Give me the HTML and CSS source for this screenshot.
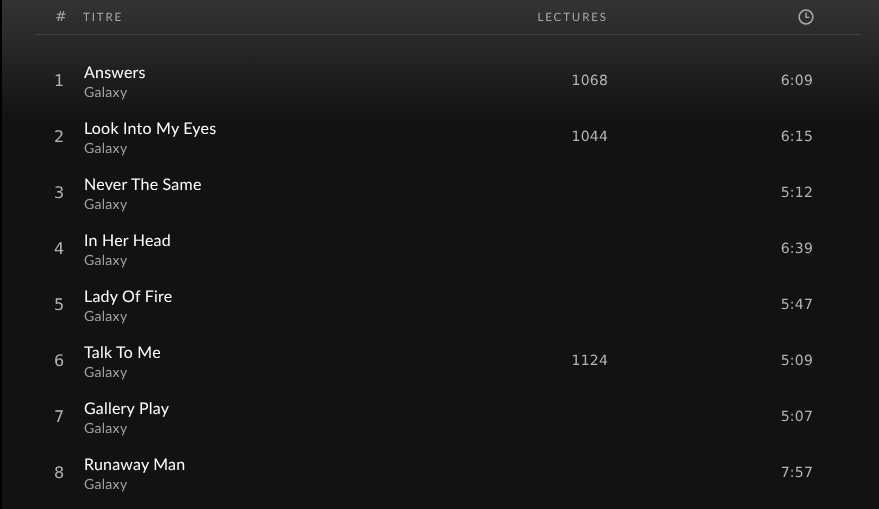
FILE: index.html
```html
<!DOCTYPE html>
<html lang="fr">
<head>
<meta charset="utf-8">
<title>Galaxy</title>
<link rel="stylesheet" href="styles.css">
</head>
<body>
<main class="panel">
  <div class="head">
    <span class="h-num">#</span>
    <span class="h-title">TITRE</span>
    <span class="h-plays">LECTURES</span>
    <span class="h-time"><svg class="clock" viewBox="0 0 16 16" width="16" height="16"><circle cx="8" cy="8" r="6.9" fill="none" stroke="currentColor" stroke-width="1.5"/><path d="M8 3.6V8.4H11.6" fill="none" stroke="currentColor" stroke-width="1.4"/></svg></span>
  </div>
  <ol class="tracks">
    <li class="track"><span class="num">1</span><div class="info"><span class="name">Answers</span><span class="artist">Galaxy</span></div><span class="plays">1068</span><span class="time">6:09</span></li>
    <li class="track"><span class="num">2</span><div class="info"><span class="name">Look Into My Eyes</span><span class="artist">Galaxy</span></div><span class="plays">1044</span><span class="time">6:15</span></li>
    <li class="track"><span class="num">3</span><div class="info"><span class="name">Never The Same</span><span class="artist">Galaxy</span></div><span class="plays"></span><span class="time">5:12</span></li>
    <li class="track"><span class="num">4</span><div class="info"><span class="name">In Her Head</span><span class="artist">Galaxy</span></div><span class="plays"></span><span class="time">6:39</span></li>
    <li class="track"><span class="num">5</span><div class="info"><span class="name">Lady Of Fire</span><span class="artist">Galaxy</span></div><span class="plays"></span><span class="time">5:47</span></li>
    <li class="track"><span class="num">6</span><div class="info"><span class="name">Talk To Me</span><span class="artist">Galaxy</span></div><span class="plays">1124</span><span class="time">5:09</span></li>
    <li class="track"><span class="num">7</span><div class="info"><span class="name">Gallery Play</span><span class="artist">Galaxy</span></div><span class="plays"></span><span class="time">5:07</span></li>
    <li class="track"><span class="num">8</span><div class="info"><span class="name">Runaway Man</span><span class="artist">Galaxy</span></div><span class="plays"></span><span class="time">7:57</span></li>
  </ol>
</main>
</body>
</html>
```
FILE: styles.css
```css
* { box-sizing: border-box; }
html, body { margin: 0; height: 100%; background: #000; overflow: hidden; }
.panel {
  margin-left: 2px;
  height: 509px;
  padding: 0 18px 0 33px;
  background: linear-gradient(#343434 0, #121212 120px, #121212 100%);
  font-family: "Lato", "Liberation Sans", sans-serif;
  color: #b3b3b3;
  text-rendering: geometricPrecision;
}
.head, .track {
  display: grid;
  grid-template-columns: 48px 1fr 148px 206px;
  align-items: center;
  will-change: opacity;
}
.head {
  height: 35px;
  border-bottom: 1px solid #434343;
  font-size: 11.5px;
  letter-spacing: 1.9px;
  color: #a8a8a8;
}
.h-num { padding-left: 20px; font-family: "DejaVu Sans", sans-serif; font-size: 14px; letter-spacing: 0; }
.h-plays { text-align: right; padding-right: 47px; }
.plays { text-align: right; padding-right: 47px; }
.h-time, .time { text-align: right; padding-right: 48px; }
.clock { display: block; margin-left: auto; margin-right: -1px; }
.tracks { list-style: none; margin: 16px 0 0; padding: 0; }
.track { height: 56px; }
.num { padding: 2px 0 0 19px; font-family: "DejaVu Sans", sans-serif; font-size: 16px; }
.info { display: flex; flex-direction: column; margin-left: 1px; padding-top: 5px; }
.name { font-size: 16px; line-height: 20px; color: #fff; letter-spacing: 0.2px; }
.artist { font-size: 14px; line-height: 17px; letter-spacing: 0.3px; color: #a3a3a3; }
.plays, .time { padding-top: 4px; font-family: "DejaVu Sans", sans-serif; font-size: 14px; letter-spacing: 0.2px; }
```
